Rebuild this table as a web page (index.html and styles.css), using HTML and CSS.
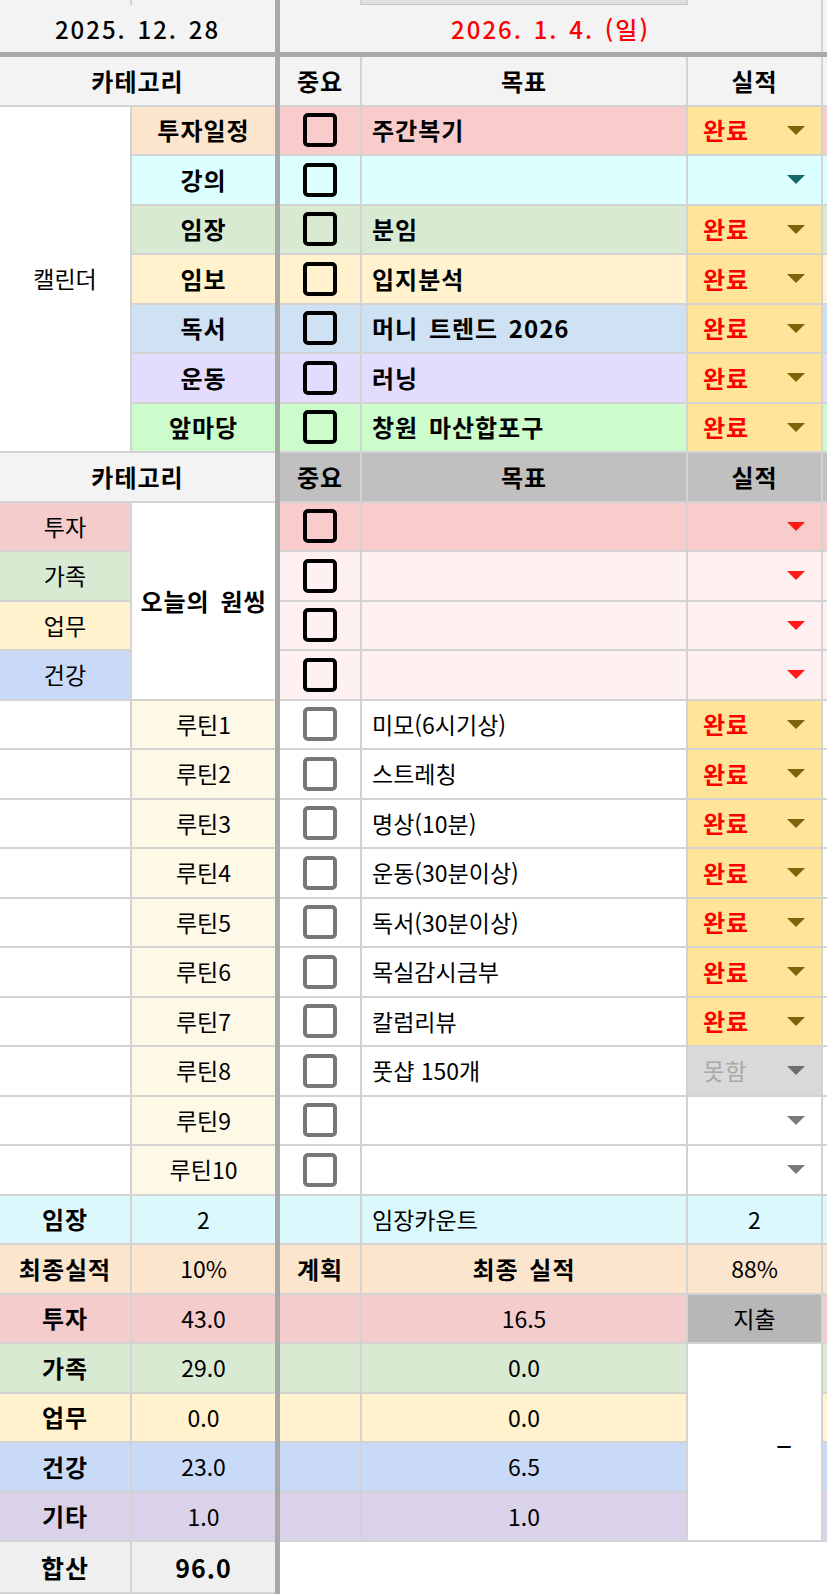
FILE: index.html
```html
<!DOCTYPE html>
<html lang="ko">
<head>
<meta charset="utf-8">
<title>주간 계획</title>
<link rel="stylesheet" href="styles.css">
</head>
<body>
<div class="sheet">
  <div class="vsep"></div>
  <div class="hsep"></div>

  <!-- partial previous row -->
  <div class="c hd top"></div>
  <div class="c hd top nr"></div>
  <div class="c hd top"></div>
  <div class="c prev"></div>
  <div class="c hd top"></div>
  <div class="c hd top s"></div>

  <!-- date row -->
  <div class="c hd top nr date span2">2025. 12. 28</div>
  <div class="c hd top date red span3">2026. 1. 4. (일)</div>
  <div class="c hd top s"></div>

  <!-- header 1 -->
  <div class="c hd nr b span2">카테고리</div>
  <div class="c hd b">중요</div>
  <div class="c hd b">목표</div>
  <div class="c hd b">실적</div>
  <div class="c hd s"></div>

  <!-- calendar -->
  <div class="c wh rs7">캘린더</div>
  <div class="c nr b pc">투자일정</div>
  <div class="c pk2"><span class="cb"></span></div>
  <div class="c pk2 b l">주간복기</div>
  <div class="c dn st"><span class="done">완료</span><i class="ar brn"></i></div>
  <div class="c s pk2"></div>

  <div class="c nr b cy">강의</div>
  <div class="c cy"><span class="cb"></span></div>
  <div class="c cy b l"></div>
  <div class="c cy end"><i class="ar teal"></i></div>
  <div class="c s cy"></div>

  <div class="c nr b gr">임장</div>
  <div class="c gr"><span class="cb"></span></div>
  <div class="c gr b l">분임</div>
  <div class="c dn st"><span class="done">완료</span><i class="ar brn"></i></div>
  <div class="c s gr"></div>

  <div class="c nr b ye">임보</div>
  <div class="c ye"><span class="cb"></span></div>
  <div class="c ye b l">입지분석</div>
  <div class="c dn st"><span class="done">완료</span><i class="ar brn"></i></div>
  <div class="c s ye"></div>

  <div class="c nr b bl">독서</div>
  <div class="c bl"><span class="cb"></span></div>
  <div class="c bl b l">머니 트렌드 2026</div>
  <div class="c dn st"><span class="done">완료</span><i class="ar brn"></i></div>
  <div class="c s bl"></div>

  <div class="c nr b lv">운동</div>
  <div class="c lv"><span class="cb"></span></div>
  <div class="c lv b l">러닝</div>
  <div class="c dn st"><span class="done">완료</span><i class="ar brn"></i></div>
  <div class="c s lv"></div>

  <div class="c nr b lg">앞마당</div>
  <div class="c lg"><span class="cb"></span></div>
  <div class="c lg b l">창원 마산합포구</div>
  <div class="c dn st"><span class="done">완료</span><i class="ar brn"></i></div>
  <div class="c s lg"></div>

  <!-- header 2 -->
  <div class="c hd nr b span2">카테고리</div>
  <div class="c gy b">중요</div>
  <div class="c gy b">목표</div>
  <div class="c gy b">실적</div>
  <div class="c s gy"></div>

  <!-- one thing -->
  <div class="c pk">투자</div>
  <div class="c wh nr b rs4">오늘의 원씽</div>
  <div class="c pk2"><span class="cb"></span></div>
  <div class="c pk2"></div>
  <div class="c pk2 end"><i class="ar red"></i></div>
  <div class="c s pk2"></div>

  <div class="c gr">가족</div>
  <div class="c lp"><span class="cb"></span></div>
  <div class="c lp"></div>
  <div class="c lp end"><i class="ar red"></i></div>
  <div class="c s lp"></div>

  <div class="c ye">업무</div>
  <div class="c lp"><span class="cb"></span></div>
  <div class="c lp"></div>
  <div class="c lp end"><i class="ar red"></i></div>
  <div class="c s lp"></div>

  <div class="c cb2">건강</div>
  <div class="c lp"><span class="cb"></span></div>
  <div class="c lp"></div>
  <div class="c lp end"><i class="ar red"></i></div>
  <div class="c s lp"></div>

  <!-- routines -->
  <div class="c wh"></div>
  <div class="c nr cr">루틴1</div>
  <div class="c wh"><span class="cb g"></span></div>
  <div class="c wh l">미모(6시기상)</div>
  <div class="c dn st"><span class="done">완료</span><i class="ar brn"></i></div>
  <div class="c s wh"></div>

  <div class="c wh"></div>
  <div class="c nr cr">루틴2</div>
  <div class="c wh"><span class="cb g"></span></div>
  <div class="c wh l">스트레칭</div>
  <div class="c dn st"><span class="done">완료</span><i class="ar brn"></i></div>
  <div class="c s wh"></div>

  <div class="c wh"></div>
  <div class="c nr cr">루틴3</div>
  <div class="c wh"><span class="cb g"></span></div>
  <div class="c wh l">명상(10분)</div>
  <div class="c dn st"><span class="done">완료</span><i class="ar brn"></i></div>
  <div class="c s wh"></div>

  <div class="c wh"></div>
  <div class="c nr cr">루틴4</div>
  <div class="c wh"><span class="cb g"></span></div>
  <div class="c wh l">운동(30분이상)</div>
  <div class="c dn st"><span class="done">완료</span><i class="ar brn"></i></div>
  <div class="c s wh"></div>

  <div class="c wh"></div>
  <div class="c nr cr">루틴5</div>
  <div class="c wh"><span class="cb g"></span></div>
  <div class="c wh l">독서(30분이상)</div>
  <div class="c dn st"><span class="done">완료</span><i class="ar brn"></i></div>
  <div class="c s wh"></div>

  <div class="c wh"></div>
  <div class="c nr cr">루틴6</div>
  <div class="c wh"><span class="cb g"></span></div>
  <div class="c wh l">목실감시금부</div>
  <div class="c dn st"><span class="done">완료</span><i class="ar brn"></i></div>
  <div class="c s wh"></div>

  <div class="c wh"></div>
  <div class="c nr cr">루틴7</div>
  <div class="c wh"><span class="cb g"></span></div>
  <div class="c wh l">칼럼리뷰</div>
  <div class="c dn st"><span class="done">완료</span><i class="ar brn"></i></div>
  <div class="c s wh"></div>

  <div class="c wh"></div>
  <div class="c nr cr">루틴8</div>
  <div class="c wh"><span class="cb g"></span></div>
  <div class="c wh l">풋샵 150개</div>
  <div class="c no st"><span class="miss">못함</span><i class="ar dgy"></i></div>
  <div class="c s wh"></div>

  <div class="c wh"></div>
  <div class="c nr cr">루틴9</div>
  <div class="c wh"><span class="cb g"></span></div>
  <div class="c wh l"></div>
  <div class="c wh end"><i class="ar mgy"></i></div>
  <div class="c s wh"></div>

  <div class="c wh"></div>
  <div class="c nr cr">루틴10</div>
  <div class="c wh"><span class="cb g"></span></div>
  <div class="c wh l"></div>
  <div class="c wh end"><i class="ar mgy"></i></div>
  <div class="c s wh"></div>

  <!-- summary -->
  <div class="c ic b">임장</div>
  <div class="c ic nr">2</div>
  <div class="c ic"></div>
  <div class="c ic l">임장카운트</div>
  <div class="c ic">2</div>
  <div class="c s ic"></div>

  <div class="c pc b">최종실적</div>
  <div class="c pc nr">10%</div>
  <div class="c pc b">계획</div>
  <div class="c pc b">최종 실적</div>
  <div class="c pc">88%</div>
  <div class="c s pc"></div>

  <div class="c pk b">투자</div>
  <div class="c pk nr">43.0</div>
  <div class="c pk"></div>
  <div class="c pk">16.5</div>
  <div class="c ex">지출</div>
  <div class="c s pk"></div>

  <div class="c gr b">가족</div>
  <div class="c gr nr">29.0</div>
  <div class="c gr"></div>
  <div class="c gr">0.0</div>
  <div class="c wh rs4 dash">–</div>
  <div class="c s gr"></div>

  <div class="c ye b">업무</div>
  <div class="c ye nr">0.0</div>
  <div class="c ye"></div>
  <div class="c ye">0.0</div>
  <div class="c s ye"></div>

  <div class="c cb2 b">건강</div>
  <div class="c cb2 nr">23.0</div>
  <div class="c cb2"></div>
  <div class="c cb2">6.5</div>
  <div class="c s cb2"></div>

  <div class="c pu b">기타</div>
  <div class="c pu nr">1.0</div>
  <div class="c pu"></div>
  <div class="c pu">1.0</div>
  <div class="c s pu"></div>

  <div class="c tot b big">합산</div>
  <div class="c tot nr b big">96.0</div>
</div>
</body>
</html>
```

FILE: styles.css
```css
* { box-sizing: border-box; }
html, body { margin: 0; padding: 0; background: #fff; }
body {
  font-family: "Noto Sans CJK KR", "Noto Sans", sans-serif;
  font-size: 23px;
  color: #000;
}
.sheet {
  display: grid;
  grid-template-columns: 132px 143px 5px 82px 326px 135px 4px;
  grid-template-rows: 5px 47px 5px repeat(30, 49.5px) 52px;
  width: 827px;
  height: 1594px;
  overflow: hidden;
}
.c {
  display: flex;
  align-items: center;
  justify-content: center;
  border-right: 2px solid #d3d3d3;
  border-bottom: 2px solid #d3d3d3;
  line-height: 1;
  white-space: nowrap;
  letter-spacing: 0;
  min-width: 0;
  overflow: hidden;
}
.vsep { grid-column: 3; grid-row: 1 / -1; background: #a9a9a9; }
.hsep { grid-column: 1 / -1; grid-row: 3; background: #a9a9a9; }
.nr { border-right: 0; }
.s { border-right: 0; }
.top { border-bottom: 0; }
.span2 { grid-column: span 2; }
.span3 { grid-column: span 3; }
.rs7 { grid-row: span 7; }
.rs4 { grid-row: span 4; }

.b { font-size: 24px; font-weight: 700; letter-spacing: 1px; word-spacing: 3px; }
.l { justify-content: flex-start; padding-left: 10px; }
.st { justify-content: space-between; padding: 0 16px 0 15px; }
.end { justify-content: flex-end; padding-right: 16px; }
.date { font-size: 24px; font-weight: 500; letter-spacing: 2px; word-spacing: 2px; }
.red { color: #ff0000; }
.big { font-size: 25px; }

.hd { background: #f3f3f3; }
.prev { background: #e0e0e0; border-bottom: 1px solid #c4c4c4; }
.wh { background: #fff; }
.pc { background: #fce5cd; }
.pk { background: #f4cccc; }
.pk2 { background: #f9cccc; }
.lp { background: #fff0f2; }
.cy { background: #dcffff; }
.ic { background: #dbf9fd; }
.gr { background: #d9ead3; }
.ye { background: #fff2cc; }
.bl { background: #cfe2f3; }
.cb2 { background: #c9daf8; }
.lv { background: #e3dcfc; }
.pu { background: #d9d2e9; }
.lg { background: #ccfccc; }
.gy { background: #c0c0c0; }
.cr { background: #fef8e7; }
.dn { background: #ffe599; }
.no { background: #d9d9d9; }
.ex { background: #b7b7b7; }
.tot { background: #efefef; }

.done { color: #ff0000; font-size: 24px; font-weight: 700; letter-spacing: 1px; }
.miss { color: #a8a8a8; letter-spacing: 1px; }

.cb {
  display: block;
  width: 34px;
  height: 34px;
  border: 4px solid #000;
  border-radius: 5px;
}
.cb.g { border-color: #777; background: #fff; }

.ar {
  display: block;
  width: 0;
  height: 0;
  border-left: 9px solid transparent;
  border-right: 9px solid transparent;
  border-top: 9px solid #000;
}
.ar.brn { border-top-color: #80620a; }
.ar.teal { border-top-color: #15686c; }
.ar.red { border-top-color: #ff1a1a; }
.ar.dgy { border-top-color: #6e6e6e; }
.ar.mgy { border-top-color: #7a7a7a; }

.dash { justify-content: flex-end; padding-right: 29px; font-size: 30px; }
```
